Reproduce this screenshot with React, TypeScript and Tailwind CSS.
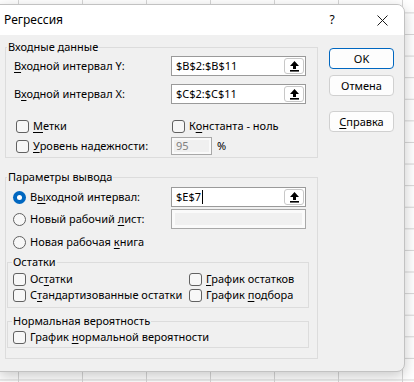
import type { ReactNode } from 'react';

const U = ({ children }: { children: ReactNode }) => <span className="underline underline-offset-[2px]">{children}</span>;

function Arrow() {
  return (
    <svg width="11" height="12" viewBox="0 0 11 12">
      <path d="M5.5 1 L10 6 H7 V9 H4 V6 H1 Z" fill="#000" />
      <rect x="1" y="10" width="9" height="1.6" fill="#000" />
    </svg>
  );
}

function RefInput({ value, caret }: { value: string; caret?: boolean }) {
  return (
    <div className="w-[135px] h-[20px] border border-[#9a9a9a] bg-white flex items-center pl-[4px] pr-[1px]">
      <span className="flex-1 flex items-center text-black">
        {value}
        {caret && <span className="inline-block w-px h-[14px] bg-black ml-[1px]" />}
      </span>
      <span className="w-[20px] h-[16px] border border-[#c8c8c8] rounded-[3px] bg-white flex items-center justify-center">
        <Arrow />
      </span>
    </div>
  );
}

function Check({ children }: { children: ReactNode }) {
  return (
    <div className="flex items-center gap-[4px]">
      <span className="w-[13px] h-[13px] shrink-0 rounded-[3px] border border-[#616161] bg-[#f7f7f7]" />
      <span className="whitespace-nowrap">{children}</span>
    </div>
  );
}

function Radio({ checked, children }: { checked?: boolean; children: ReactNode }) {
  return (
    <div className="flex items-center gap-[4px]">
      {checked ? (
        <span className="w-[13px] h-[13px] shrink-0 rounded-full bg-[#0067c0] flex items-center justify-center">
          <span className="w-[5px] h-[5px] rounded-full bg-white" />
        </span>
      ) : (
        <span className="w-[13px] h-[13px] shrink-0 rounded-full border border-[#616161] bg-[#f7f7f7]" />
      )}
      <span className="whitespace-nowrap">{children}</span>
    </div>
  );
}

function Button({ primary, children }: { primary?: boolean; children: ReactNode }) {
  return (
    <div
      className={
        primary
          ? 'w-[65px] h-[21px] rounded-[4px] border border-[#0067c0] bg-[#fdfdfd] flex items-center justify-center'
          : 'w-[65px] h-[21px] rounded-[4px] border border-[#d0d0d0] bg-[#fdfdfd] flex items-center justify-center'
      }
    >
      {children}
    </div>
  );
}

export default function App() {
  return (
    <div className="w-[414px] h-[382px] overflow-hidden bg-white bg-[linear-gradient(to_right,#d6d6d6_1px,transparent_1px),linear-gradient(to_bottom,#d6d6d6_1px,transparent_1px)] bg-[size:64px_21.6px] bg-[position:18px_12.4px] font-['Segoe_UI','Noto_Sans',sans-serif] text-[11px] leading-[16px] text-black">
      <div className="mt-[4px] -ml-px w-[406px] h-[368px] bg-[#f0f0f0] border border-[#c2c2c2] rounded-r-[8px] shadow-[0_4px_14px_rgba(0,0,0,0.22)] flex flex-col overflow-hidden">
        <div className="h-[30px] bg-white flex items-center pl-[4px] shrink-0">
          <span className="text-[12px]">Регрессия</span>
          <span className="ml-auto w-[12px] text-center text-[12px] mr-[39px]">?</span>
          <svg width="11" height="11" viewBox="0 0 11 11" className="mr-[16px]">
            <path d="M0.5 0.5 L10.5 10.5 M10.5 0.5 L0.5 10.5" stroke="#1a1a1a" strokeWidth="1" />
          </svg>
        </div>

        <div className="flex pl-[5px] pt-[4px]">
          <div className="w-[313px] flex flex-col">
            <fieldset className="border border-[#dcdcdc] w-[313px]">
              <legend className="ml-[1px] px-[1px] leading-[16px]">Входные данные</legend>
              <div className="pl-[8px] pt-[1px] pb-[1px] flex flex-col">
                <div className="h-[20px] flex items-center">
                  <span className="w-[157px]">
                    <U>В</U>ходной интервал Y:
                  </span>
                  <RefInput value="$B$2:$B$11" />
                </div>
                <div className="h-[20px] flex items-center mt-[8px]">
                  <span className="w-[157px]">
                    В<U>х</U>одной интервал X:
                  </span>
                  <RefInput value="$C$2:$C$11" />
                </div>
                <div className="h-[20px] flex items-center mt-[12px] pl-[2px]">
                  <div className="w-[156px]">
                    <Check>
                      <U>М</U>етки
                    </Check>
                  </div>
                  <Check>
                    К<U>о</U>нстанта - ноль
                  </Check>
                </div>
                <div className="h-[20px] flex items-center pl-[2px]">
                  <div className="w-[155px]">
                    <Check>
                      <U>У</U>ровень надежности:
                    </Check>
                  </div>
                  <div className="w-[41px] h-[18px] border border-[#a8a8a8] bg-[#fafafa] p-[2px]">
                    <div className="w-full h-full bg-[#f0f0f0] flex items-center pl-[2px] text-[#808080]">95</div>
                  </div>
                  <span className="ml-[5px]">%</span>
                </div>
              </div>
            </fieldset>

            <fieldset className="border border-[#dcdcdc] w-[313px] mt-[11px]">
              <legend className="ml-[1px] px-[1px] leading-[16px]">Параметры вывода</legend>
              <div className="px-[1px] pb-[10px] flex flex-col">
                <div className="h-[20px] flex items-center mt-[2px] pl-[6px]">
                  <div className="w-[158px]">
                    <Radio checked>
                      В<U>ы</U>ходной интервал:
                    </Radio>
                  </div>
                  <RefInput value="$E$7" caret />
                </div>
                <div className="h-[20px] flex items-center mt-[2px] pl-[6px]">
                  <div className="w-[158px]">
                    <Radio>
                      Новый рабочий <U>л</U>ист:
                    </Radio>
                  </div>
                  <div className="w-[135px] h-[20px] border border-[#a8a8a8] bg-[#fafafa] p-[3px]">
                    <div className="w-full h-full bg-[#f0f0f0]" />
                  </div>
                </div>
                <div className="h-[20px] flex items-center mt-[3px] pl-[6px]">
                  <Radio>
                    Новая рабочая <U>к</U>нига
                  </Radio>
                </div>

                <fieldset className="border border-[#dcdcdc] w-[302px] mt-[2px]">
                  <legend className="ml-[4px] px-[1px] leading-[16px]">Остатки</legend>
                  <div className="pl-[5px] pt-[1px] pb-[4px] flex flex-col">
                    <div className="h-[16px] flex items-center">
                      <div className="w-[176px]">
                        <Check>
                          Ос<U>т</U>атки
                        </Check>
                      </div>
                      <Check>
                        <U>Г</U>рафик остатков
                      </Check>
                    </div>
                    <div className="h-[16px] flex items-center">
                      <div className="w-[176px]">
                        <Check>
                          С<U>т</U>андартизованные остатки
                        </Check>
                      </div>
                      <Check>
                        График <U>п</U>одбора
                      </Check>
                    </div>
                  </div>
                </fieldset>

                <fieldset className="border border-[#dcdcdc] w-[302px] mt-[5px]">
                  <legend className="ml-[4px] px-[1px] leading-[16px]">Нормальная вероятность</legend>
                  <div className="pl-[5px] pb-[2px] flex flex-col">
                    <div className="h-[16px] flex items-center">
                      <Check>
                        График <U>н</U>ормальной вероятности
                      </Check>
                    </div>
                  </div>
                </fieldset>
              </div>
            </fieldset>
          </div>

          <div className="ml-[11px] pt-[9px] flex flex-col">
            <Button primary>OK</Button>
            <div className="mt-[6px]">
              <Button>Отмена</Button>
            </div>
            <div className="mt-[15px]">
              <Button>
                <U>С</U>правка
              </Button>
            </div>
          </div>
        </div>
      </div>
    </div>
  );
}
